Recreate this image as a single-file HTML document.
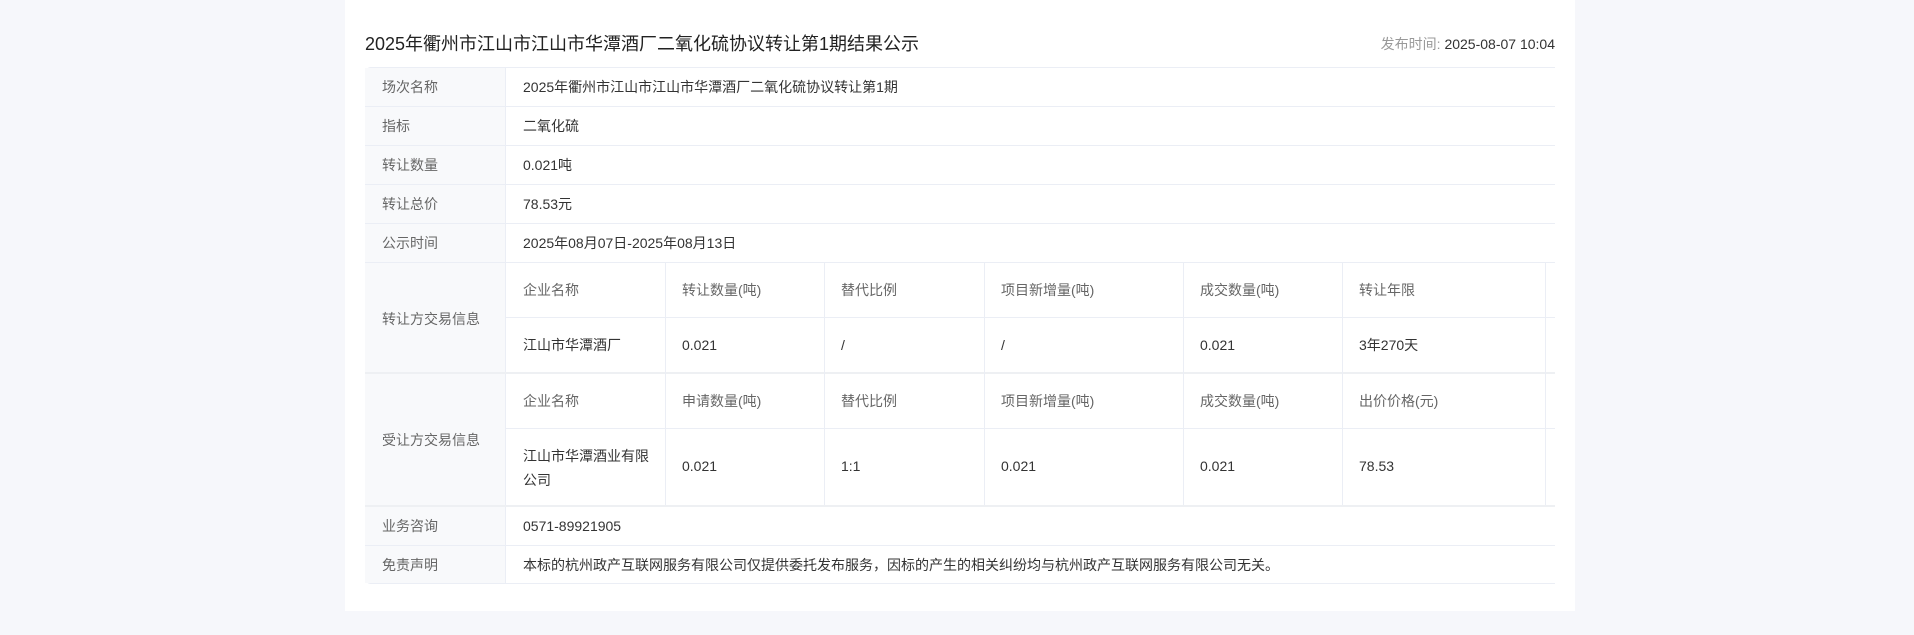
<!DOCTYPE html>
<html><head><meta charset="utf-8"><style>
*{margin:0;padding:0;box-sizing:border-box}
body{width:1914px;height:635px;background:#f6f7fb;font-family:"Liberation Sans","Noto Sans CJK SC",sans-serif;position:relative;overflow:hidden}
.panel{position:absolute;left:345px;top:0;width:1230px;height:611px;background:#fff}
.a{position:absolute;white-space:nowrap;line-height:20px}
.t{font-size:18px;color:#222;left:365px;top:32px;line-height:24px}
.pt{font-size:14px;right:359px;top:34px;color:#333}
.pt span{color:#999}
.tbl{position:absolute;left:365px;top:67px;width:1190px;height:517px;border:1px solid #ebeef5;border-right:none;border-radius:6px 0 0 6px;overflow:hidden}
.lab{position:absolute;left:365px;width:141px;background:#f8f9fb;border-right:1px solid #ebeef5}
.h{position:absolute;left:365px;width:1190px;height:1px;background:#ebeef5}
.v{position:absolute;width:1px;background:#ebeef5}
.l{font-size:14px;color:#666}
.d{font-size:14px;color:#333}
</style></head><body>
<div class="panel"></div>
<div class="a t">2025年衢州市江山市江山市华潭酒厂二氧化硫协议转让第1期结果公示</div>
<div class="a pt"><span>发布时间: </span>2025-08-07 10:04</div>
<div class="tbl"></div>
<div class="lab" style="top:68px;height:515px"></div>
<div class="h" style="top:106px"></div>
<div class="h" style="top:145px"></div>
<div class="h" style="top:184px"></div>
<div class="h" style="top:223px"></div>
<div class="h" style="top:262px"></div>
<div class="h" style="top:372px;height:2px;background:#eef0f3"></div>
<div class="h" style="top:505px;height:2px;background:#eef0f3"></div>
<div class="h" style="top:545px"></div>
<div class="h" style="top:317px;left:506px;width:1049px"></div>
<div class="h" style="top:428px;left:506px;width:1049px"></div>
<div class="v" style="left:665px;top:262px;height:243px"></div>
<div class="v" style="left:824px;top:262px;height:243px"></div>
<div class="v" style="left:984px;top:262px;height:243px"></div>
<div class="v" style="left:1183px;top:262px;height:243px"></div>
<div class="v" style="left:1342px;top:262px;height:243px"></div>
<div class="v" style="left:1545px;top:262px;height:243px"></div>

<div class="a l" style="left:382px;top:77px">场次名称</div>
<div class="a d" style="left:523px;top:77px">2025年衢州市江山市江山市华潭酒厂二氧化硫协议转让第1期</div>
<div class="a l" style="left:382px;top:116px">指标</div>
<div class="a d" style="left:523px;top:116px">二氧化硫</div>
<div class="a l" style="left:382px;top:155px">转让数量</div>
<div class="a d" style="left:523px;top:155px">0.021吨</div>
<div class="a l" style="left:382px;top:194px">转让总价</div>
<div class="a d" style="left:523px;top:194px">78.53元</div>
<div class="a l" style="left:382px;top:233px">公示时间</div>
<div class="a d" style="left:523px;top:233px">2025年08月07日-2025年08月13日</div>

<div class="a l" style="left:382px;top:309px">转让方交易信息</div>
<div class="a l" style="left:523px;top:280px">企业名称</div>
<div class="a l" style="left:682px;top:280px">转让数量(吨)</div>
<div class="a l" style="left:841px;top:280px">替代比例</div>
<div class="a l" style="left:1001px;top:280px">项目新增量(吨)</div>
<div class="a l" style="left:1200px;top:280px">成交数量(吨)</div>
<div class="a l" style="left:1359px;top:280px">转让年限</div>
<div class="a d" style="left:523px;top:335px">江山市华潭酒厂</div>
<div class="a d" style="left:682px;top:335px">0.021</div>
<div class="a d" style="left:841px;top:335px">/</div>
<div class="a d" style="left:1001px;top:335px">/</div>
<div class="a d" style="left:1200px;top:335px">0.021</div>
<div class="a d" style="left:1359px;top:335px">3年270天</div>

<div class="a l" style="left:382px;top:430px">受让方交易信息</div>
<div class="a l" style="left:523px;top:391px">企业名称</div>
<div class="a l" style="left:682px;top:391px">申请数量(吨)</div>
<div class="a l" style="left:841px;top:391px">替代比例</div>
<div class="a l" style="left:1001px;top:391px">项目新增量(吨)</div>
<div class="a l" style="left:1200px;top:391px">成交数量(吨)</div>
<div class="a l" style="left:1359px;top:391px">出价价格(元)</div>
<div class="a d" style="left:523px;top:444px;line-height:24px">江山市华潭酒业有限<br>公司</div>
<div class="a d" style="left:682px;top:456px">0.021</div>
<div class="a d" style="left:841px;top:456px">1:1</div>
<div class="a d" style="left:1001px;top:456px">0.021</div>
<div class="a d" style="left:1200px;top:456px">0.021</div>
<div class="a d" style="left:1359px;top:456px">78.53</div>

<div class="a l" style="left:382px;top:516px">业务咨询</div>
<div class="a d" style="left:523px;top:516px">0571-89921905</div>
<div class="a l" style="left:382px;top:555px">免责声明</div>
<div class="a d" style="left:523px;top:555px">本标的杭州政产互联网服务有限公司仅提供委托发布服务，因标的产生的相关纠纷均与杭州政产互联网服务有限公司无关。</div>
</body></html>
